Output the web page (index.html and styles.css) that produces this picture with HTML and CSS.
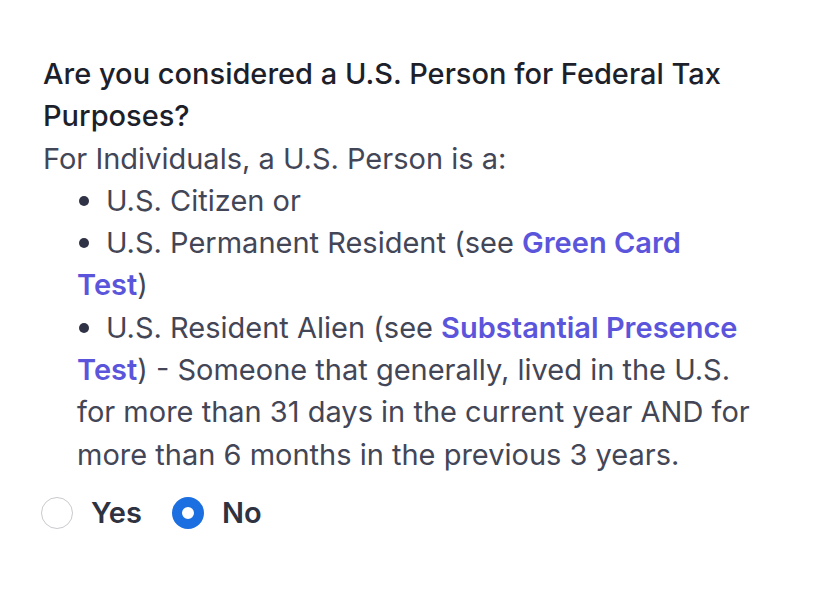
FILE: index.html
```html
<!DOCTYPE html>
<html lang="en">
<head>
<meta charset="utf-8">
<link rel="stylesheet" href="styles.css">
</head>
<body>
<div class="question">
  <h2 class="title">Are you considered a U.S. Person for Federal Tax Purposes?</h2>
  <p class="intro">For Individuals, a U.S. Person is a:</p>
  <ul class="list">
    <li>U.S. Citizen or</li>
    <li>U.S. Permanent Resident (see <a class="link" href="#">Green Card Test</a>)</li>
    <li>U.S. Resident Alien (see <a class="link" href="#">Substantial Presence Test</a>) - Someone that generally, lived in the U.S. for more than 31 days in the current year AND for more than 6 months in the previous 3 years.</li>
  </ul>
  <div class="options">
    <label class="option"><span class="radio"></span><span class="option-label">Yes</span></label>
    <label class="option"><span class="radio checked"></span><span class="option-label">No</span></label>
  </div>
</div>
</body>
</html>
```
FILE: styles.css
```css
html, body {
  margin: 0;
  padding: 0;
  background: #ffffff;
}
body {
  font-family: Inter, "Noto Sans", sans-serif;
  font-size: 29px;
  line-height: 42.3px;
  color: #434656;
}
.question {
  padding: 53px 0 0 43px;
  width: 709px;
}
.title {
  margin: 0;
  font-size: 29px;
  font-weight: 500;
  line-height: 42.3px;
  color: #1d1f2b;
}
.intro {
  margin: 0;
}
.list {
  margin: 0;
  padding: 0 0 0 34px;
  list-style: none;
}
.list li::before {
  content: "";
  display: inline-block;
  width: 10px;
  height: 10px;
  border-radius: 50%;
  background: #2f3345;
  margin: 0 17px 0 2px;
  vertical-align: 5px;
}
.link {
  color: #5b55dc;
  font-weight: 600;
  text-decoration: none;
}
.options {
  display: flex;
  align-items: center;
  gap: 30px;
  margin-top: 16px;
  margin-left: -2px;
}
.option {
  display: flex;
  align-items: center;
  gap: 18px;
}
.radio {
  width: 32px;
  height: 32px;
  border-radius: 50%;
  border: 1.5px solid #c9cacf;
  box-sizing: border-box;
  background: #fff;
}
.radio.checked {
  border: 10px solid #1b6fe0;
  background: #fff;
}
.option-label {
  font-weight: 600;
  color: #2f3240;
}
```
